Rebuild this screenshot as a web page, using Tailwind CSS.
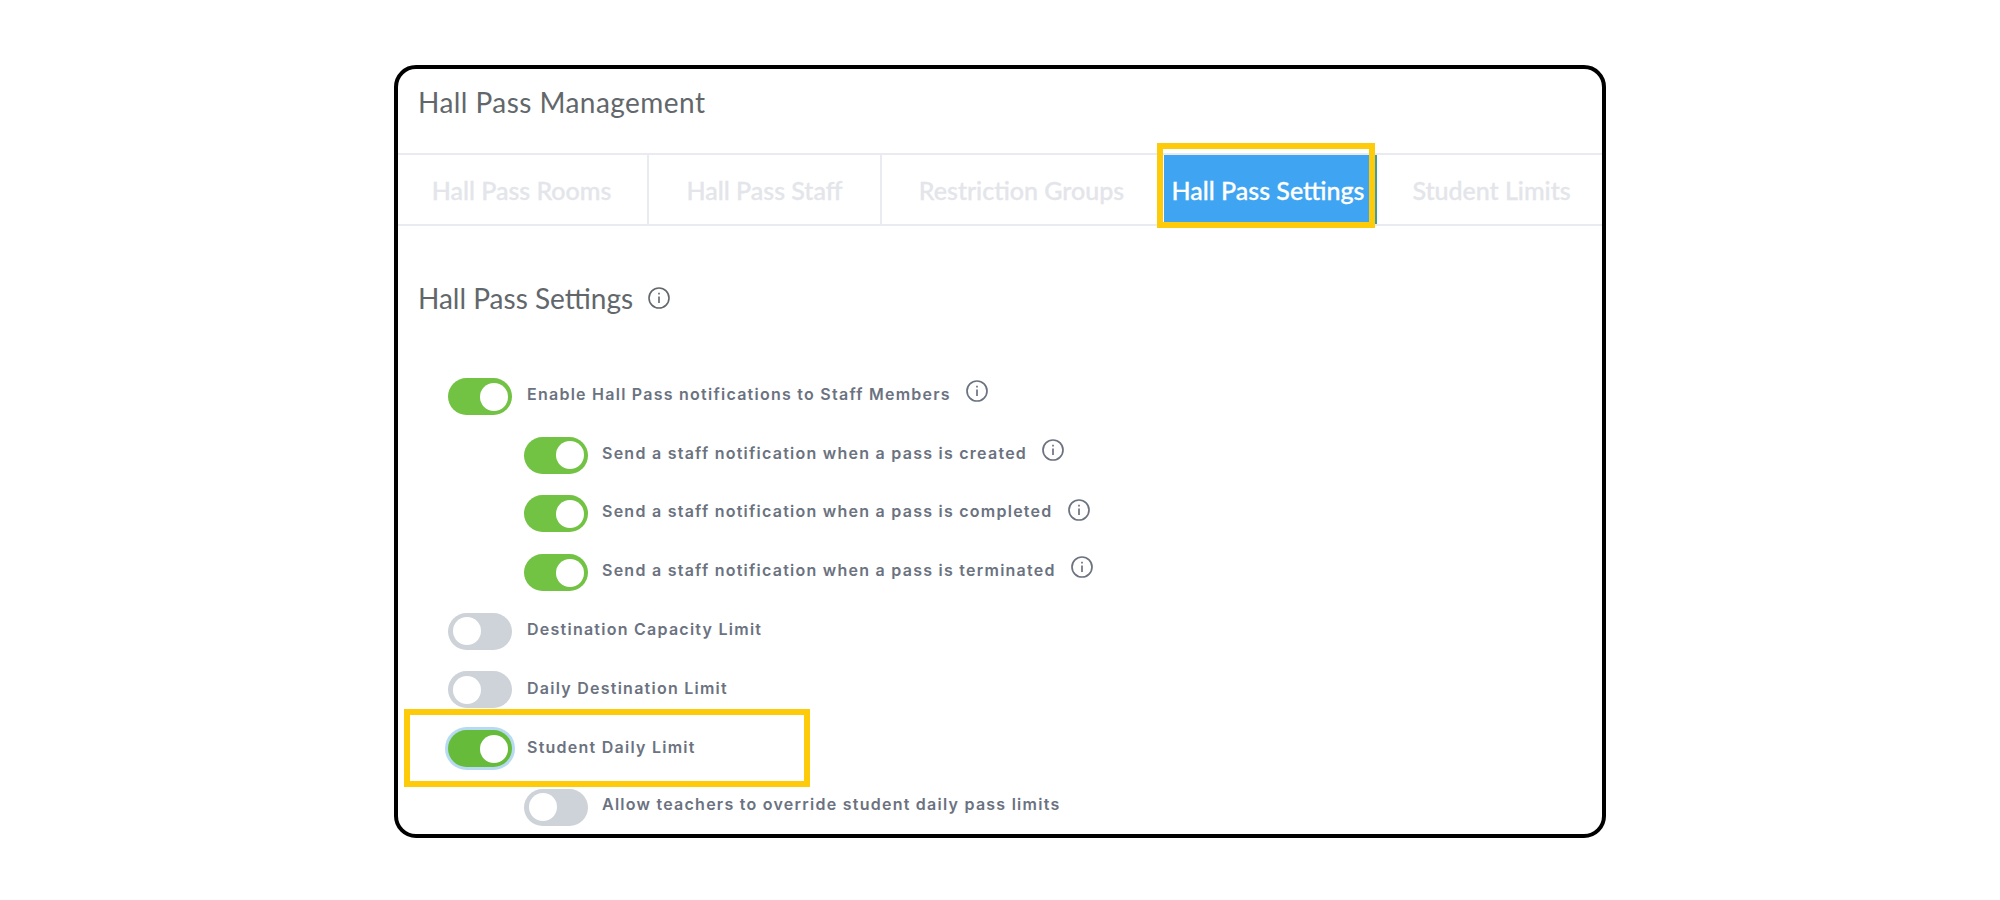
<!DOCTYPE html>
<html lang="en">
<head>
    <meta charset="UTF-8">
    <title>Hall Pass Management</title>
    <script src="https://cdn.jsdelivr.net/npm/@tailwindcss/browser@4"></script>
</head>
<body class="bg-white">

<div class="relative ml-[394px] mt-[65px] w-[1212px] h-[773px] border-[4px] border-black rounded-[22px] overflow-hidden bg-white font-['Lato',sans-serif]">

    <div class="h-[84px] pl-[20px] pt-[13px] text-[28px] tracking-[0.45px] leading-[40px] text-[#62676b]">Hall Pass Management</div>

    <!-- tabs -->
    <div class="flex h-[73px] border-y-2 border-[#e9ebf0] text-[25px] font-medium text-[#e3e5ea] [-webkit-text-stroke:0.3px]">
        <div class="w-[251px] pt-[2px] pr-[2px] flex items-center justify-center border-r-2 border-[#e9ebf0]">Hall Pass Rooms</div>
        <div class="w-[233px] pt-[2px] flex items-center justify-center border-r-2 border-[#e9ebf0]">Hall Pass Staff</div>
        <div class="w-[282px] pt-[2px] pr-[3px] flex items-center justify-center">Restriction Groups</div>
        <div class="w-[213px] pt-[2px] flex items-center justify-center pr-[3px] bg-[#3fa5f2] border-r-2 border-[#3f9aa8] text-white">Hall Pass Settings</div>
        <div class="w-[225px] pt-[2px] pl-[4px] flex items-center justify-center">Student Limits</div>
    </div>

    <div class="flex items-center gap-[15px] pl-[20px] mt-[52px] h-[40px] text-[28px] text-[#62676b]">
        Hall Pass Settings
        <svg class="w-[22px] h-[22px]" viewBox="0 0 22 22" fill="none" stroke="#62676b" stroke-width="1.6"><circle cx="11" cy="11" r="10"/><path d="M11 9.5v6.5M11 5.8v1.8"/></svg>
    </div>

    <!-- settings -->
    <div class="mt-[60px] flex flex-col gap-[21.7px] font-['Inter',sans-serif] text-[16px] font-semibold tracking-[1.25px] text-[#6b7280]">
        <div class="flex items-center h-[37px] pl-[50px] gap-[15px]">
            <div class="w-[64px] h-[37px] rounded-full bg-[#72c244] flex items-center justify-end p-[4.5px]"><div class="w-[28px] h-[28px] rounded-full bg-white"></div></div>
            <span class="-mt-[5px]">Enable Hall Pass notifications to Staff Members</span>
            <svg class="w-[22px] h-[22px] -mt-[12px]" viewBox="0 0 22 22" fill="none" stroke="#6b7280" stroke-width="1.7"><circle cx="11" cy="11" r="10"/><path d="M11 9.5v6.5M11 5.8v1.8"/></svg>
        </div>
        <div class="flex items-center h-[37px] pl-[126px] gap-[14px]">
            <div class="w-[64px] h-[37px] rounded-full bg-[#72c244] flex items-center justify-end p-[4.5px]"><div class="w-[28px] h-[28px] rounded-full bg-white"></div></div>
            <span class="-mt-[5px]">Send a staff notification when a pass is created</span>
            <svg class="w-[22px] h-[22px] ml-[1px] -mt-[11px]" viewBox="0 0 22 22" fill="none" stroke="#6b7280" stroke-width="1.7"><circle cx="11" cy="11" r="10"/><path d="M11 9.5v6.5M11 5.8v1.8"/></svg>
        </div>
        <div class="flex items-center h-[37px] pl-[126px] gap-[14px]">
            <div class="w-[64px] h-[37px] rounded-full bg-[#72c244] flex items-center justify-end p-[4.5px]"><div class="w-[28px] h-[28px] rounded-full bg-white"></div></div>
            <span class="-mt-[5px]">Send a staff notification when a pass is completed</span>
            <svg class="w-[22px] h-[22px] ml-[1px] -mt-[8px]" viewBox="0 0 22 22" fill="none" stroke="#6b7280" stroke-width="1.7"><circle cx="11" cy="11" r="10"/><path d="M11 9.5v6.5M11 5.8v1.8"/></svg>
        </div>
        <div class="flex items-center h-[37px] pl-[126px] gap-[14px]">
            <div class="w-[64px] h-[37px] rounded-full bg-[#72c244] flex items-center justify-end p-[4.5px]"><div class="w-[28px] h-[28px] rounded-full bg-white"></div></div>
            <span class="-mt-[5px]">Send a staff notification when a pass is terminated</span>
            <svg class="w-[22px] h-[22px] ml-[1px] -mt-[11px]" viewBox="0 0 22 22" fill="none" stroke="#6b7280" stroke-width="1.7"><circle cx="11" cy="11" r="10"/><path d="M11 9.5v6.5M11 5.8v1.8"/></svg>
        </div>
        <div class="flex items-center h-[37px] pl-[50px] gap-[15px]">
            <div class="w-[64px] h-[37px] rounded-full bg-[#ced2d9] flex items-center p-[4.5px]"><div class="w-[28px] h-[28px] rounded-full bg-white"></div></div>
            <span class="-mt-[5px]">Destination Capacity Limit</span>
        </div>
        <div class="flex items-center h-[37px] pl-[50px] gap-[15px]">
            <div class="w-[64px] h-[37px] rounded-full bg-[#ced2d9] flex items-center p-[4.5px]"><div class="w-[28px] h-[28px] rounded-full bg-white"></div></div>
            <span class="-mt-[4px]">Daily Destination Limit</span>
        </div>
        <div class="flex items-center h-[37px] pl-[50px] gap-[15px]">
            <div class="w-[64px] h-[37px] rounded-full bg-[#66bb3a] ring-[3px] ring-[#b7daf3] flex items-center justify-end p-[4.5px]"><div class="w-[28px] h-[28px] rounded-full bg-white"></div></div>
            <span class="-mt-[3px]">Student Daily Limit</span>
        </div>
        <div class="flex items-center h-[37px] pl-[126px] gap-[14px]">
            <div class="w-[64px] h-[37px] rounded-full bg-[#ced2d9] flex items-center p-[4.5px]"><div class="w-[28px] h-[28px] rounded-full bg-white"></div></div>
            <span class="-mt-[7px]">Allow teachers to override student daily pass limits</span>
        </div>
    </div>

    <!-- yellow highlights -->
    <div class="absolute left-[759px] top-[74px] w-[218px] h-[85px] border-[6px] border-[#fecb0b]"></div>
    <div class="absolute left-[6px] top-[640px] w-[406px] h-[78px] border-[6px] border-[#fecb0b]"></div>
</div>

</body>
</html>
